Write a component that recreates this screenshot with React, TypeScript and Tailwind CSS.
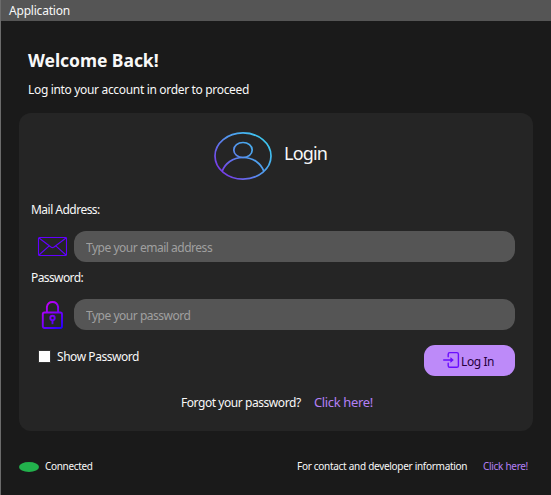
function UserIcon() {
  return (
    <svg width="58" height="49" viewBox="0 0 58 49" fill="none" stroke="url(#userGradient)" strokeWidth="1.7">
      <defs>
        <linearGradient id="userGradient" x1="8" y1="44" x2="50" y2="6" gradientUnits="userSpaceOnUse">
          <stop offset="0" stopColor="#7a35e8" />
          <stop offset="0.5" stopColor="#5592ee" />
          <stop offset="1" stopColor="#3cc8f0" />
        </linearGradient>
      </defs>
      <ellipse cx="29" cy="24" rx="28" ry="23.1" />
      <ellipse cx="29" cy="18" rx="9.2" ry="7.5" />
      <path d="M8.3 39C11 31.5 18.5 25.5 29 25.5S47 31.5 49.7 39" />
    </svg>
  );
}

function MailIcon() {
  return (
    <svg width="30" height="21" viewBox="0 0 30 21" fill="none" stroke="#6200ff" strokeWidth="1.1">
      <rect x="1.5" y="1.5" width="28" height="18" rx="1" />
      <path d="M2 2L13.9 11Q15.5 12.3 17.1 11L29 2M2 19L12.2 9.8M29 19L18.8 9.8" />
    </svg>
  );
}

function LockIcon() {
  return (
    <svg width="22" height="31" viewBox="0 0 22 31" fill="none" stroke="url(#lockGradient)" strokeWidth="1.9">
      <defs>
        <linearGradient id="lockGradient" x1="3" y1="4" x2="22" y2="27" gradientUnits="userSpaceOnUse">
          <stop offset="0" stopColor="#c800f5" />
          <stop offset="0.5" stopColor="#8000fa" />
          <stop offset="1" stopColor="#2600ff" />
        </linearGradient>
      </defs>
      <rect x="1.8" y="13.5" width="19.2" height="15.5" rx="1.7" />
      <path d="M5.9 13.5V7.8A5.7 5.9 0 0 1 17.1 7.8V13.5" />
      <circle cx="11.5" cy="19" r="2.2" />
      <path d="M11.5 21.2V25.2" />
    </svg>
  );
}

function LoginIcon() {
  return (
    <svg width="18" height="18" viewBox="0 0 18 18" fill="none" stroke="#6a0cff" strokeWidth="1.4" strokeLinecap="round">
      <path d="M6.2 5.8V3.2Q6.2 1.6 7.8 1.6H14.8Q16.4 1.6 16.4 3.2V14.7Q16.4 16.3 14.8 16.3H7.8Q6.2 16.3 6.2 14.7V12.2" />
      <path d="M1.7 9H10" />
      <path d="M9 7L11.3 9L9 11Z" fill="#6a0cff" strokeWidth="0.8" />
    </svg>
  );
}

export default function App() {
  return (
    <div className="flex h-[495px] w-[551px] flex-col overflow-hidden whitespace-nowrap border-l border-[#6b6b6b] bg-[#1a1a1a] font-['Noto_Sans','Open_Sans',sans-serif] text-[12px] text-[#f8f8f8]">
      <header className="h-[21px] shrink-0 bg-[#555555] pl-2 leading-[22px] tracking-[-0.2px]">Application</header>

      <div className="h-[92px] shrink-0 pl-[27px] pt-[27px]">
        <h1 className="h-[25px] text-[17.5px] font-bold leading-[25px] tracking-[-0.05px]">Welcome Back!</h1>
        <p className="mt-[8px] leading-[18px] tracking-[-0.33px]">Log into your account in order to proceed</p>
      </div>

      <main className="ml-[18px] h-[318px] w-[514px] shrink-0 rounded-[12px] bg-[#252525]">
        <div className="flex h-[88px] pl-[195px] pt-[19px]">
          <UserIcon />
          <h2 className="ml-3 h-[44px] text-[18px] font-normal leading-[43px] tracking-[-0.8px]">Login</h2>
        </div>

        <label className="block h-[30px] pl-3 leading-[18px] tracking-[-0.52px]">Mail Address:</label>
        <div className="flex h-[31px] items-center pl-[18px]">
          <MailIcon />
          <input
            className="ml-[7px] h-[31px] w-[441px] rounded-[12px] bg-[#555555] px-3 pt-[2px] tracking-[-0.48px] outline-none placeholder:text-[#a0a0a0]"
            placeholder="Type your email address"
          />
        </div>

        <label className="block h-[37px] pl-3 pt-[7px] leading-[18px] tracking-[-0.6px]">Password:</label>
        <div className="flex h-[31px] items-center pl-[22px]">
          <LockIcon />
          <input
            type="password"
            className="ml-[11px] h-[31px] w-[441px] rounded-[12px] bg-[#555555] px-3 pt-[2px] tracking-[-0.48px] outline-none placeholder:text-[#a0a0a0]"
            placeholder="Type your password"
          />
        </div>

        <div className="mt-[15px] flex h-[31px] justify-between pl-[19px] pr-[18px]">
          <label className="flex h-[22px] items-center tracking-[-0.45px]">
            <input type="checkbox" className="mr-[6px] size-[13px] appearance-none border border-[#333333] bg-white" />
            <span className="pt-[2px]">Show Password</span>
          </label>
          <button className="flex h-[31px] w-[91px] rounded-[11px] bg-[#bd8af9] pl-[18px] pt-[6px] text-[#26003d]">
            <LoginIcon />
            <span className="ml-[1px] mt-[2px] leading-[18px] tracking-[-0.4px]">Log In</span>
          </button>
        </div>

        <div className="mt-[18px] flex pl-[162px] leading-[18px]">
          <span className="w-[133px] tracking-[-0.44px]">Forgot your password?</span>
          <a className="text-[13px] leading-[17px] tracking-[-0.36px] text-[#b380f5]">Click here!</a>
        </div>
      </main>

      <footer className="flex h-[64px] shrink-0 items-center pl-[18px] pt-[7px] text-[10px]">
        <span className="h-[10px] w-5 rounded-[50%] bg-[#22b14c]" />
        <span className="ml-[6px] w-[252px] tracking-[-0.32px]">Connected</span>
        <span className="w-[186px] tracking-[-0.29px]">For contact and developer information</span>
        <a className="tracking-[-0.3px] text-[#b380f5]">Click here!</a>
      </footer>
    </div>
  );
}
